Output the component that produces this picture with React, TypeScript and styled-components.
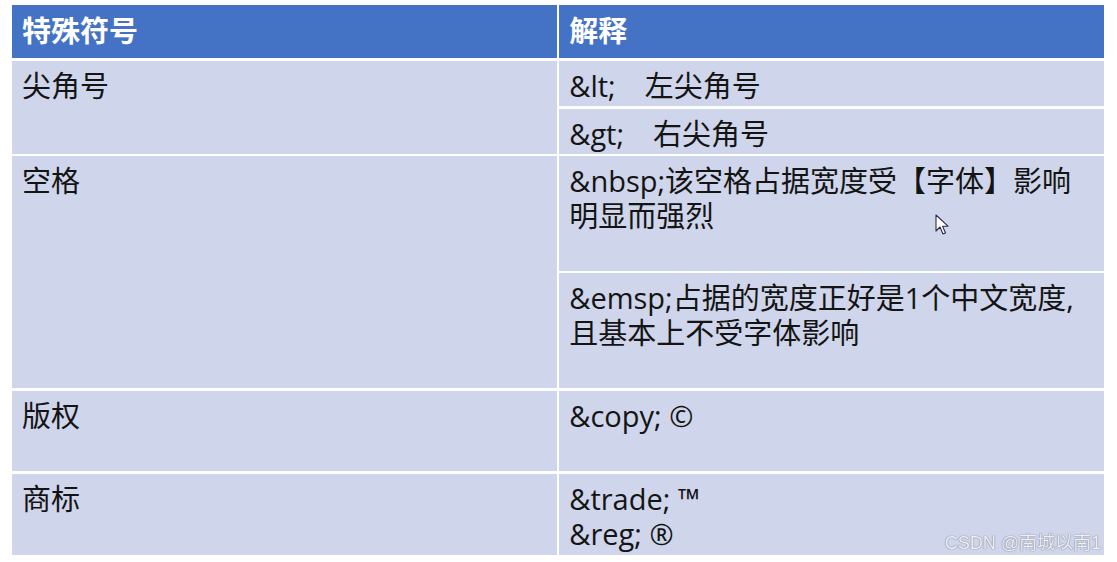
import React from "react";
import styled, { createGlobalStyle } from "styled-components";

const Global = createGlobalStyle`
  html, body { margin: 0; padding: 0; background: #ffffff; }
  body { font-family: "Open Sans", "Noto Sans CJK SC", sans-serif; }
`;

const Page = styled.div`
  position: relative;
  width: 1117px;
  height: 562px;
  padding: 5px 0 0 12px;
  box-sizing: border-box;
  background: #ffffff;
`;

const Table = styled.div`
  display: grid;
  width: 1092px;
  grid-template-columns: 544.75px 544.75px;
  grid-template-rows: 53px 45.5px 45px 114.5px 115px 80.5px 81.5px;
  gap: 2.5px;
`;

const HeadCell = styled.div`
  background: #4472c4;
  color: #ffffff;
  font-weight: 700;
  font-size: 29px;
  line-height: 35px;
  padding: 8px 10px 0;
  font-family: "Open Sans", "Noto Sans CJK SC", sans-serif;
`;

const Cell = styled.div<{ $span?: number }>`
  background: #cfd5ea;
  color: #141414;
  font-size: 29px;
  line-height: 35px;
  padding: 7px 10px 0;
  white-space: pre;
  grid-row: ${(p) => (p.$span ? `span ${p.$span}` : "auto")};
  overflow: hidden;
`;

const Line = styled.div``;

const Watermark = styled.div`
  position: absolute;
  right: 16px;
  bottom: 8px;
  font-size: 18px;
  line-height: 22px;
  color: #eef0f6;
  text-shadow: 0 0 1px #7a7f8f, 0 0 1px #7a7f8f;
  font-family: "Liberation Sans", "Noto Sans CJK SC", sans-serif;
`;

const Cursor = styled.svg`
  position: absolute;
  left: 935px;
  top: 214px;
`;

export default function App() {
  return (
    <Page>
      <Global />
      <Table>
        <HeadCell>特殊符号</HeadCell>
        <HeadCell>解释</HeadCell>

        <Cell $span={2}>尖角号</Cell>
        <Cell>{"&lt;\u3000左尖角号"}</Cell>
        <Cell>{"&gt;\u3000右尖角号"}</Cell>

        <Cell $span={2}>空格</Cell>
        <Cell>
          <Line>&amp;nbsp;该空格占据宽度受【字体】影响</Line>
          <Line>明显而强烈</Line>
        </Cell>
        <Cell>
          <Line>&amp;emsp;占据的宽度正好是1个中文宽度,</Line>
          <Line>且基本上不受字体影响</Line>
        </Cell>

        <Cell>版权</Cell>
        <Cell>&amp;copy; ©</Cell>

        <Cell>商标</Cell>
        <Cell>
          <Line>&amp;trade; ™</Line>
          <Line>&amp;reg; ®</Line>
        </Cell>
      </Table>
      <Cursor width="14" height="22" viewBox="0 0 14 22">
        <path
          d="M1 1 L1 17 L5 13 L8 20 L10.5 19 L7.6 12.2 L13 12.2 Z"
          fill="#ffffff"
          stroke="#2a2f45"
          strokeWidth="1.1"
          strokeLinejoin="round"
        />
      </Cursor>
      <Watermark>CSDN @南城以南1</Watermark>
    </Page>
  );
}
